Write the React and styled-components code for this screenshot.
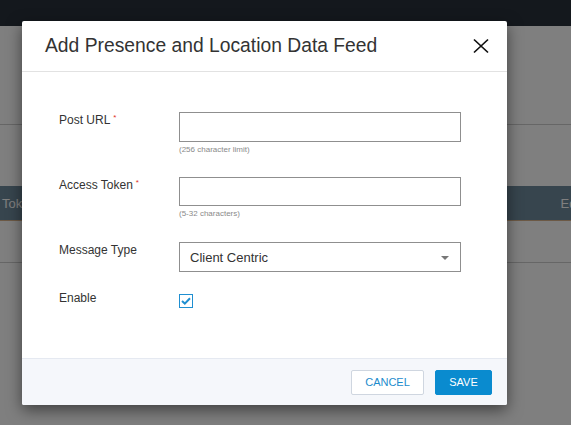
import React from "react";
import styled, { createGlobalStyle } from "styled-components";

const Global = createGlobalStyle`
  html, body { margin: 0; padding: 0; }
  body {
    width: 571px; height: 425px; overflow: hidden;
    font-family: "Liberation Sans", Arial, sans-serif;
    background: #ffffff;
  }
`;

const Page = styled.div`
  position: relative;
  width: 571px;
  height: 425px;
  display: flex;
  flex-direction: column;
  background: #ffffff;
  overflow: hidden;
`;

const TopBar = styled.div`
  height: 26px;
  background: #28313a;
`;

const Section = styled.div`
  height: ${(p) => p.$h}px;
  border-bottom: ${(p) => (p.$plain ? "none" : "1px solid #cccccc")};
  box-sizing: border-box;
`;

const TableHead = styled.div`
  height: 35px;
  background: #6f8b9c;
  border-bottom: 1px solid #d9b38a;
  display: flex;
  align-items: center;
  justify-content: space-between;
  color: #ffffff;
  font-size: 13px;
  box-sizing: border-box;
`;

const HeadCell = styled.span`
  margin-left: ${(p) => p.$ml || 0}px;
  margin-right: ${(p) => p.$mr || 0}px;
`;

const Overlay = styled.div`
  position: absolute;
  inset: 0;
  background: rgba(0, 0, 0, 0.5);
`;

const Modal = styled.div`
  position: absolute;
  left: 22px;
  top: 21px;
  width: 485px;
  height: 384px;
  background: #ffffff;
  border-radius: 2px;
  box-shadow: 0 5px 15px rgba(0, 0, 0, 0.5);
  display: flex;
  flex-direction: column;
  overflow: hidden;
`;

const Header = styled.div`
  height: 50px;
  border-bottom: 1px solid #e2e2e2;
  display: flex;
  align-items: center;
  justify-content: space-between;
  padding: 0 18px 0 23px;
  flex-shrink: 0;
`;

const Title = styled.h2`
  margin: 0;
  font-size: 19.3px;
  font-weight: 400;
  color: #333333;
  line-height: 24px;
  padding-bottom: 1px;
`;

const CloseButton = styled.button`
  border: 0;
  background: transparent;
  padding: 0;
  width: 17px;
  height: 17px;
  display: flex;
  align-items: center;
  justify-content: center;
  cursor: pointer;
`;

const Body = styled.div`
  flex: 1;
  padding: 40px 0 0 37px;
  display: flex;
  flex-direction: column;
`;

const Row = styled.div`
  display: flex;
  align-items: flex-start;
  margin-top: ${(p) => p.$mt || 0}px;
`;

const Label = styled.div`
  width: 120px;
  font-size: 12px;
  line-height: 16px;
  color: #333333;
`;

const Req = styled.span`
  color: #e0301e;
  font-size: 8px;
  vertical-align: top;
  margin-left: 3px;
  line-height: 11px;
`;

const Field = styled.div`
  display: flex;
  flex-direction: column;
`;

const TextInput = styled.input`
  width: 282px;
  height: ${(p) => p.$h || 30}px;
  box-sizing: border-box;
  border: 1px solid #8f8f8f;
  padding: 0 10px;
  font-family: inherit;
  font-size: 12px;
  outline: none;
  margin: 0;
`;

const Help = styled.div`
  margin-top: 3px;
  font-size: 8px;
  line-height: 10px;
  color: #8a8a8a;
`;

const Select = styled.div`
  width: 282px;
  height: 30px;
  box-sizing: border-box;
  border: 1px solid #8f8f8f;
  padding: 0 11px 0 10px;
  display: flex;
  align-items: center;
  justify-content: space-between;
  font-size: 13px;
  color: #333333;
`;

const Caret = styled.span`
  width: 0;
  height: 0;
  border-left: 4px solid transparent;
  border-right: 4px solid transparent;
  border-top: 4px solid #777777;
  margin-top: 1px;
`;

const Check = styled.span`
  width: 14px;
  height: 14px;
  box-sizing: border-box;
  border: 1px solid #1f8fd1;
  display: flex;
  align-items: center;
  justify-content: center;
  margin-top: 4px;
`;

const Footer = styled.div`
  height: 47px;
  flex-shrink: 0;
  background: #f5f7fb;
  border-top: 1px solid #e5e9f1;
  box-sizing: border-box;
  display: flex;
  align-items: center;
  justify-content: flex-end;
  gap: 11px;
  padding: 0 15px 0 0;
`;

const Button = styled.button`
  height: 25px;
  width: ${(p) => p.$w}px;
  box-sizing: border-box;
  border-radius: 2px;
  font-family: inherit;
  font-size: 11px;
  text-transform: uppercase;
  padding: 0;
  cursor: pointer;
  border: 1px solid ${(p) => (p.$primary ? "#0a8bcf" : "#cfd6e0")};
  background: ${(p) => (p.$primary ? "#0a8bcf" : "#ffffff")};
  color: ${(p) => (p.$primary ? "#ffffff" : "#1c8ccd")};
`;

export default function App() {
  return (
    <>
      <Global />
      <Page>
        <TopBar />
        <Section $h={99} />
        <Section $h={61} $plain />
        <TableHead>
          <HeadCell $ml={2}>Token</HeadCell>
          <HeadCell $mr={-12}>Edit</HeadCell>
        </TableHead>
        <Section $h={42} />
        <Overlay />
        <Modal>
          <Header>
            <Title>Add Presence and Location Data Feed</Title>
            <CloseButton aria-label="Close">
              <svg width="16" height="16" viewBox="0 0 16 16">
                <path d="M1 1.5 L15 14.5 M15 1.5 L1 14.5" stroke="#111" strokeWidth="1.7" fill="none" />
              </svg>
            </CloseButton>
          </Header>
          <Body>
            <Row>
              <Label>
                Post URL<Req>*</Req>
              </Label>
              <Field>
                <TextInput />
                <Help>(256 character limit)</Help>
              </Field>
            </Row>
            <Row $mt={22}>
              <Label>
                Access Token<Req>*</Req>
              </Label>
              <Field>
                <TextInput $h={29} />
                <Help>(5-32 characters)</Help>
              </Field>
            </Row>
            <Row $mt={23}>
              <Label>Message Type</Label>
              <Select>
                Client Centric
                <Caret />
              </Select>
            </Row>
            <Row $mt={18}>
              <Label>Enable</Label>
              <Check>
                <svg width="10" height="8" viewBox="0 0 10 8">
                  <path d="M1 4 L3.8 6.6 L9 1.2" stroke="#1f8fd1" strokeWidth="2" fill="none" />
                </svg>
              </Check>
            </Row>
          </Body>
          <Footer>
            <Button $w={73}>Cancel</Button>
            <Button $w={57} $primary>Save</Button>
          </Footer>
        </Modal>
      </Page>
    </>
  );
}
